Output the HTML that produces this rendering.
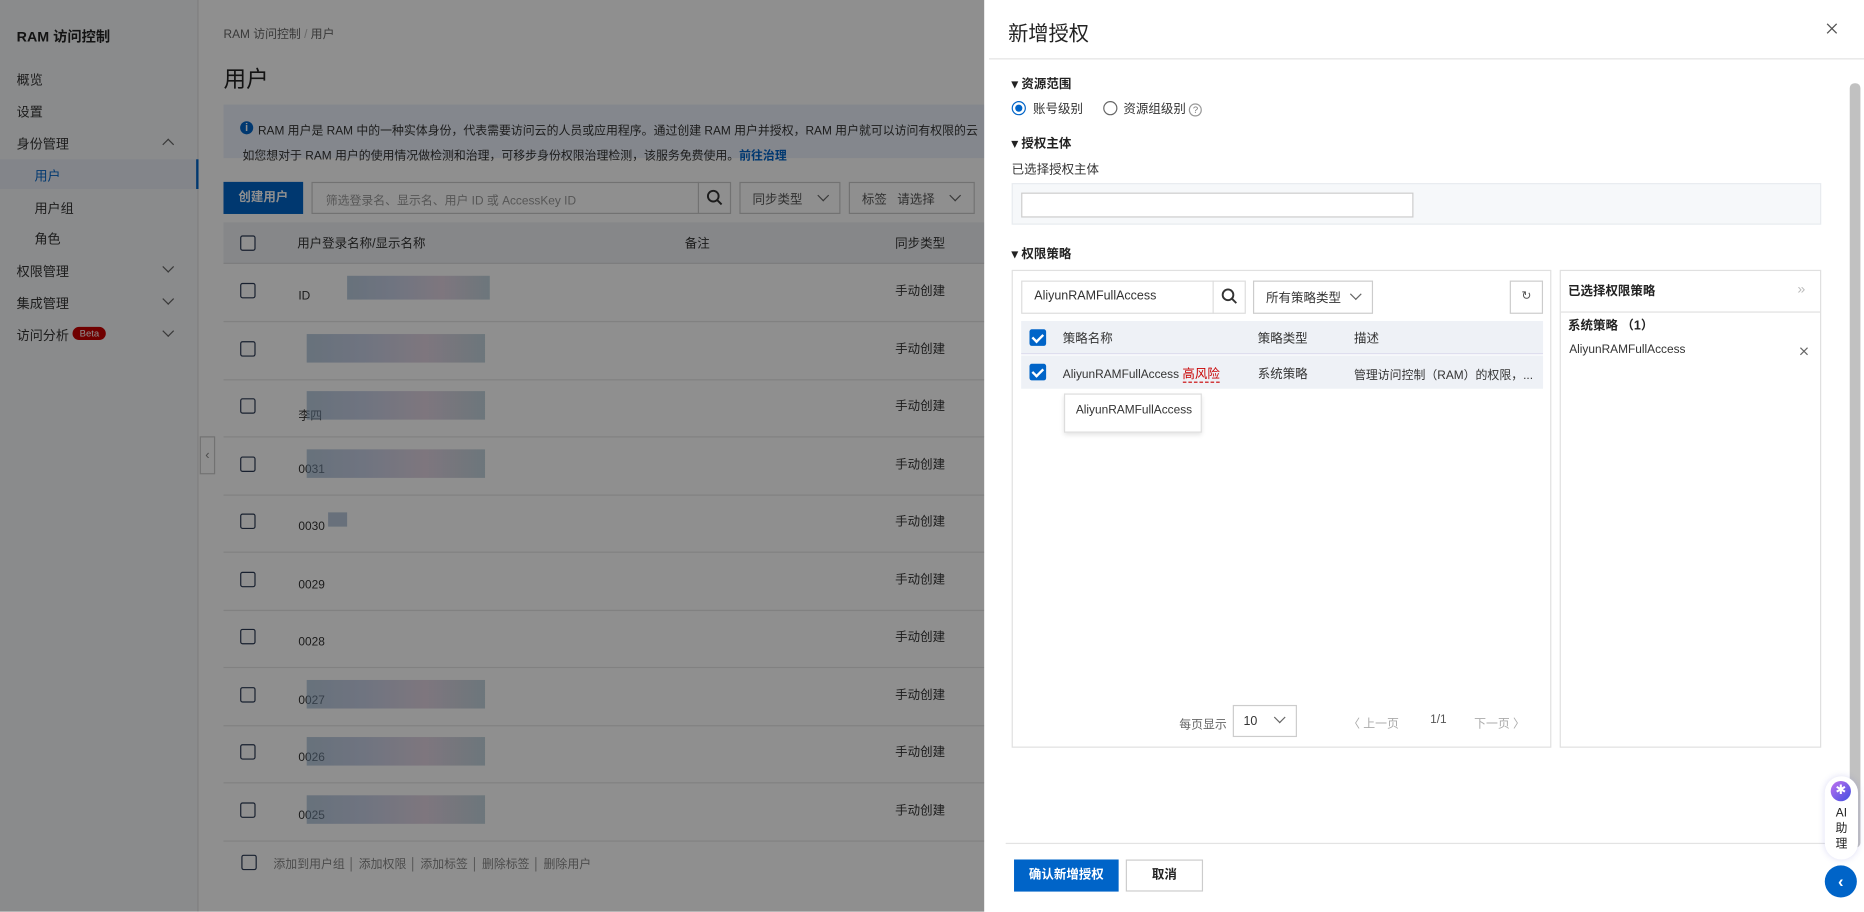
<!DOCTYPE html>
<html><head><meta charset="utf-8"><style>
*{box-sizing:border-box;margin:0;padding:0}
html,body{width:1864px;height:912px;overflow:hidden;background:#fff}
body{font-family:"Liberation Sans","Noto Sans CJK SC",sans-serif;color:#333;font-size:11px}
#s{position:absolute;left:0;top:0;width:1568px;height:767px;transform:scale(1.18878);transform-origin:0 0;overflow:hidden;background:#fff}
.a{position:absolute;white-space:nowrap}
.d{font-size:10.5px}
.cb{position:absolute;width:13px;height:13px;border:1px solid #2b3a55;border-radius:2px;background:#fff}
.blk{position:absolute;opacity:.55}
.mask{position:absolute;left:0;top:0;width:828px;height:767px;background:rgba(0,0,0,.44)}
.ck{position:absolute;width:14px;height:14px;background:#0064c8;border-radius:2px}
.ck:after{content:"";position:absolute;left:4px;top:1.5px;width:4px;height:7px;border:solid #fff;border-width:0 2px 2px 0;transform:rotate(45deg)}
.chev{position:absolute;width:7px;height:7px;border:solid #666;border-width:0 1px 1px 0;transform:rotate(45deg)}
</style></head><body><div id="s">
<div class="a" style="left:0;top:0;width:167px;height:767px;background:#f7f8fa;border-right:1px solid #e3e3e3"></div>
<div class="a" style="left:14px;top:22px;font-size:12px;font-weight:bold;color:#222">RAM 访问控制</div>
<div class="a" style="left:14px;top:59px">概览</div>
<div class="a" style="left:14px;top:86px">设置</div>
<div class="a" style="left:14px;top:113px">身份管理</div>
<div class="chev" style="left:138px;top:118px;transform:rotate(225deg)"></div>
<div class="a" style="left:0;top:134px;width:167px;height:25px;background:#e9eef7;border-right:2px solid #0064c8"></div>
<div class="a" style="left:29px;top:140px;color:#0064c8">用户</div>
<div class="a" style="left:29px;top:167px">用户组</div>
<div class="a" style="left:29px;top:193px">角色</div>
<div class="a" style="left:14px;top:220px">权限管理</div><div class="chev" style="left:138px;top:221px"></div>
<div class="a" style="left:14px;top:247px">集成管理</div><div class="chev" style="left:138px;top:248px"></div>
<div class="a" style="left:14px;top:274px">访问分析</div><div class="chev" style="left:138px;top:275px"></div>
<div class="a" style="left:61px;top:275px;background:#c80000;color:#fff;font-size:8px;padding:1px 6px;border-radius:8px">Beta</div>
<div class="a" style="left:168px;top:367px;width:13px;height:32px;border:1px solid #ccc;background:#fff;color:#888;font-size:11px;line-height:30px;text-align:center">‹</div>
<div class="a" style="left:188px;top:20px;color:#666;font-size:10px">RAM 访问控制 <span style="color:#bbb">/</span> 用户</div>
<div class="a" style="left:188px;top:52px;font-size:19px;color:#222">用户</div>
<div class="a" style="left:188px;top:88px;width:640px;height:45px;background:#ebf1fb"></div>
<div class="a" style="left:202px;top:102px;width:11px;height:11px;border-radius:50%;background:#0064c8;color:#fff;font-size:9px;text-align:center;line-height:11px;font-weight:bold">i</div>
<div class="a" style="left:217px;top:101px;font-size:10px;color:#333">RAM 用户是 RAM 中的一种实体身份，代表需要访问云的人员或应用程序。通过创建 RAM 用户并授权，RAM 用户就可以访问有权限的云</div>
<div class="a" style="left:204px;top:122px;font-size:10px;color:#333">如您想对于 RAM 用户的使用情况做检测和治理，可移步身份权限治理检测，该服务免费使用。<b style="color:#0064c8">前往治理</b></div>
<div class="a" style="left:188px;top:153px;width:67px;height:27px;background:#0064c8;color:#fff;font-size:10.5px;line-height:27px;text-align:center;font-weight:bold">创建用户</div>
<div class="a" style="left:262px;top:153px;width:353px;height:27px;border:1px solid #ccc;background:#fff"></div>
<div class="a" style="left:274px;top:160px;color:#999;font-size:10px">筛选登录名、显示名、用户 ID 或 AccessKey ID</div>
<div class="a" style="left:587px;top:153px;width:1px;height:27px;background:#ccc"></div>
<svg class="a" style="left:594px;top:159px" width="14" height="14"><circle cx="6" cy="6" r="4.5" fill="none" stroke="#333" stroke-width="1.6"/><path d="M9.5 9.5L13 13" stroke="#333" stroke-width="1.6"/></svg>
<div class="a" style="left:622px;top:153px;width:85px;height:27px;border:1px solid #ccc;background:#fff"></div>
<div class="a" style="left:633px;top:160px;font-size:10.5px;color:#555">同步类型</div><div class="chev" style="left:689px;top:161px"></div>
<div class="a" style="left:714px;top:153px;width:106px;height:27px;border:1px solid #ccc;background:#fff"></div>
<div class="a" style="left:725px;top:160px;font-size:10.5px;color:#555">标签 &nbsp; 请选择</div><div class="chev" style="left:800px;top:161px"></div>
<div class="a" style="left:188px;top:187px;width:640px;height:35px;background:#eff1f5;border-bottom:1px solid #ddd"></div>
<div class="cb" style="left:202px;top:198px"></div>
<div class="a" style="left:250px;top:197px;font-size:10.5px">用户登录名称/显示名称</div>
<div class="a" style="left:576px;top:197px;font-size:10.5px">备注</div>
<div class="a" style="left:753px;top:197px;font-size:10.5px">同步类型</div>
<div id="rows"></div>
<div class="cb" style="left:203px;top:719px"></div>
<div class="a" style="left:230px;top:718px;color:#888;font-size:10px">添加到用户组 │ 添加权限 │ 添加标签 │ 删除标签 │ 删除用户</div>
<div class="mask"></div>
<div class="a" style="left:828px;top:0;width:740px;height:767px;background:#fff"></div>
<div class="a" style="left:848px;top:14px;font-size:17px;color:#222">新增授权</div>
<svg class="a" style="left:1536px;top:19px" width="10" height="10"><path d="M1 1L9 9M9 1L1 9" stroke="#555" stroke-width="1.1"/></svg>
<div class="a" style="left:832px;top:49px;width:736px;height:1px;background:#e3e3e3"></div>
<div class="a d" style="left:851px;top:63px;font-weight:bold;color:#222">▾ 资源范围</div>
<div class="a" style="left:851px;top:85px;width:12px;height:12px;border:1px solid #0064c8;border-radius:50%"></div>
<div class="a" style="left:854px;top:88px;width:6px;height:6px;background:#0064c8;border-radius:50%"></div>
<div class="a d" style="left:869px;top:84px">账号级别</div>
<div class="a" style="left:928px;top:85px;width:12px;height:12px;border:1px solid #666;border-radius:50%"></div>
<div class="a d" style="left:945px;top:84px">资源组级别 <span style="font-size:8px;color:#777;border:1px solid #999;border-radius:50%;padding:0 2px">?</span></div>
<div class="a d" style="left:851px;top:113px;font-weight:bold;color:#222">▾ 授权主体</div>
<div class="a d" style="left:851px;top:135px">已选择授权主体</div>
<div class="a" style="left:851px;top:154px;width:681px;height:35px;background:#f6f8fa;border:1px solid #e8ebef"></div>
<div class="a" style="left:859px;top:162px;width:330px;height:21px;background:#fff;border:1px solid #ccc"></div>
<div class="a d" style="left:851px;top:206px;font-weight:bold;color:#222">▾ 权限策略</div>
<div class="a" style="left:851px;top:227px;width:454px;height:402px;border:1px solid #e0e0e0"></div>
<div class="a" style="left:1312px;top:227px;width:220px;height:402px;border:1px solid #e0e0e0"></div>
<div class="a" style="left:859px;top:236px;width:189px;height:28px;border:1px solid #ddd"></div>
<div class="a d" style="left:870px;top:243px">AliyunRAMFullAccess</div>
<div class="a" style="left:1020px;top:236px;width:1px;height:28px;background:#ddd"></div>
<svg class="a" style="left:1027px;top:242px" width="14" height="14"><circle cx="6" cy="6" r="4.5" fill="none" stroke="#333" stroke-width="1.6"/><path d="M9.5 9.5L13 13" stroke="#333" stroke-width="1.6"/></svg>
<div class="a" style="left:1054px;top:236px;width:101px;height:28px;border:1px solid #ccc"></div>
<div class="a d" style="left:1065px;top:243px">所有策略类型</div><div class="chev" style="left:1137px;top:244px"></div>
<div class="a" style="left:1270px;top:236px;width:28px;height:28px;border:1px solid #ccc;text-align:center;line-height:26px;font-size:10px;color:#555">↻</div>
<div class="a" style="left:859px;top:270px;width:439px;height:28px;background:#eef1f6;border-bottom:1px solid #dde"></div>
<div class="ck" style="left:866px;top:277px"></div>
<div class="a d" style="left:894px;top:277px">策略名称</div>
<div class="a d" style="left:1058px;top:277px">策略类型</div>
<div class="a d" style="left:1139px;top:277px">描述</div>
<div class="a" style="left:859px;top:299px;width:439px;height:28px;background:#eef1f6"></div>
<div class="ck" style="left:866px;top:306px"></div>
<div class="a" style="left:894px;top:307px;font-size:10px">AliyunRAMFullAccess <span style="color:#c80000;border-bottom:1px dashed #c80000;font-size:10.5px">高风险</span></div>
<div class="a d" style="left:1058px;top:307px">系统策略</div>
<div class="a" style="left:1139px;top:307px;font-size:10px">管理访问控制（RAM）的权限，...</div>
<div class="a" style="left:895px;top:331px;width:116px;height:33px;background:#fff;border:1px solid #ddd;box-shadow:0 2px 4px rgba(0,0,0,.12)"></div>
<div class="a" style="left:905px;top:340px;font-size:10px">AliyunRAMFullAccess</div>
<div class="a" style="left:992px;top:601px;font-size:10px;color:#666">每页显示</div>
<div class="a" style="left:1037px;top:593px;width:54px;height:27px;border:1px solid #ccc"></div>
<div class="a d" style="left:1046px;top:601px">10</div><div class="chev" style="left:1073px;top:600px"></div>
<div class="a" style="left:1134px;top:600px;font-size:10px;color:#aaa">〈 上一页</div>
<div class="a" style="left:1203px;top:600px;font-size:10px;color:#555">1/1</div>
<div class="a" style="left:1240px;top:600px;font-size:10px;color:#aaa">下一页 〉</div>
<div class="a d" style="left:1319px;top:237px;font-weight:bold;color:#222">已选择权限策略</div>
<div class="a" style="left:1512px;top:236px;font-size:12px;color:#bbb">»</div>
<div class="a" style="left:1313px;top:262px;width:218px;height:1px;background:#e0e0e0"></div>
<div class="a d" style="left:1319px;top:266px;font-weight:bold;color:#222">系统策略 （1）</div>
<div class="a" style="left:1320px;top:289px;font-size:10px">AliyunRAMFullAccess</div>
<svg class="a" style="left:1514px;top:292px" width="7" height="7"><path d="M0.5 0.5L6.5 6.5M6.5 0.5L0.5 6.5" stroke="#666" stroke-width="1"/></svg>
<div class="a" style="left:846px;top:709px;width:706px;height:1px;background:#e3e3e3"></div>
<div class="a" style="left:853px;top:723px;width:88px;height:27px;background:#0064c8;color:#fff;font-size:10.5px;font-weight:bold;text-align:center;line-height:27px">确认新增授权</div>
<div class="a" style="left:947px;top:723px;width:65px;height:27px;border:1px solid #ccc;font-size:10.5px;font-weight:bold;text-align:center;line-height:25px;color:#222">取消</div>
<div class="a" style="left:1556px;top:70px;width:9px;height:643px;background:#c1c1c1;border-radius:4px"></div>
<div class="a" style="left:1535px;top:653px;width:28px;height:70px;background:#fff;border-radius:14px;box-shadow:0 0 6px rgba(80,80,200,.2)"></div>
<div class="a" style="left:1540px;top:657px;width:17px;height:17px;border-radius:50%;background:linear-gradient(135deg,#c070f0,#4050e0);color:#fff;font-size:11px;text-align:center;line-height:17px">✱</div>
<div class="a" style="left:1541px;top:678px;font-size:10px;line-height:13px;text-align:center;width:16px;white-space:normal;color:#222">AI 助 理</div>
<div class="a" style="left:1535px;top:728px;width:27px;height:27px;border-radius:50%;background:#0064c8;color:#fff;text-align:center;line-height:26px;font-size:14px;font-weight:bold">‹</div>
</div>
<script>
var r=document.getElementById('rows'),h='',n=['ID','','李四','0031','0030','0029','0028','0027','0026','0025'];
for(var i=0;i<10;i++){var y=222+i*48.5;
h+='<div class="a" style="left:188px;top:'+(y+48)+'px;width:640px;height:1px;background:#e6e6e6"></div>';
h+='<div class="cb" style="left:202px;top:'+(y+16)+'px"></div>';
h+='<div class="a" style="left:753px;top:'+(y+15)+'px;font-size:10.5px">手动创建</div>';
if(n[i])h+='<div class="a" style="left:251px;top:'+(y+22)+'px;font-size:10px">'+n[i]+'</div>';
if(i!=5&&i!=6&&i!=4){h+='<div class="blk" style="left:'+(i==0?292:258)+'px;top:'+(y+10)+'px;width:'+(i==0?120:150)+'px;height:'+(i==0?20:24)+'px;background:linear-gradient(90deg,#7fa0c0,#9aa8d0,#c8b0c8,#8fb0c0)"></div>';}
if(i==4)h+='<div class="blk" style="left:276px;top:'+(y+15)+'px;width:16px;height:12px;background:#7f9ac0"></div>';
}
r.innerHTML=h;
</script>
</body></html>
